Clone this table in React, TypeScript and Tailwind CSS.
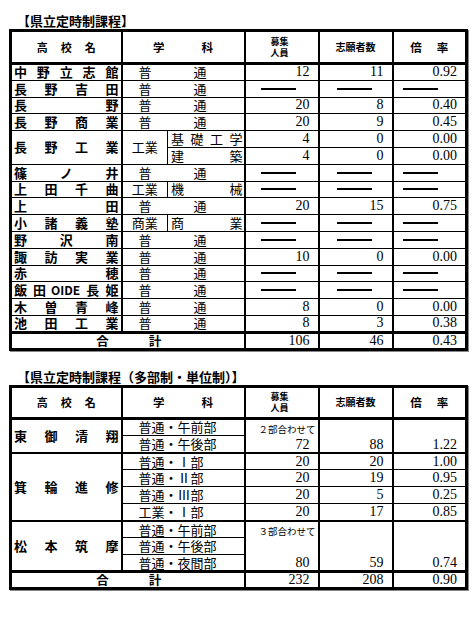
import React from "react";

const G = "font-['Noto_Sans_CJK_JP',sans-serif]";
const S = "font-['Liberation_Serif','Noto_Sans_CJK_JP',serif]";
const base = "border-solid border-black p-0";
const std = `${base} border-y border-x-2`;

function Spread({ items, className = "" }: { items: string[]; className?: string }) {
  return (
    <div className={`flex justify-between ${className}`}>
      {items.map((c, i) => (
        <span key={i}>{c}</span>
      ))}
    </div>
  );
}

function NameTd({ items, rowSpan, extra = "" }: { items: string[]; rowSpan?: number; extra?: string }) {
  return (
    <td rowSpan={rowSpan} className={`${std} ${extra} ${G} font-bold text-[13px] leading-[14px] align-middle`}>
      <Spread items={items} className="px-[2px]" />
    </td>
  );
}

function Futsu({ extra = "" }: { extra?: string }) {
  return (
    <td colSpan={2} className={`${std} ${extra} ${G} text-[13px] leading-[14px]`}>
      <div className="flex pl-[16px]">
        <span>普</span>
        <span className="ml-[42px]">通</span>
      </div>
    </td>
  );
}

function Num({ v, extra = "" }: { v: string; extra?: string }) {
  return (
    <td className={`${std} ${extra} ${S} text-[14px] leading-[14px] text-right pr-[8px]`}>{v}</td>
  );
}

function Dashes() {
  return (
    <>
      <td className={std}>
        <div className="h-[2px] w-[35px] bg-black ml-[15px]" />
      </td>
      <td className={std}>
        <div className="h-[2px] w-[35px] bg-black ml-[17px]" />
      </td>
      <td className={std}>
        <div className="h-[2px] w-[35px] bg-black ml-[9px]" />
      </td>
    </>
  );
}

function Nums({ a, b, c, extra = "" }: { a: string; b: string; c: string; extra?: string }) {
  return (
    <>
      <Num v={a} extra={extra} />
      <Num v={b} extra={extra} />
      <Num v={c} extra={extra} />
    </>
  );
}

function Cols() {
  return (
    <colgroup>
      <col className="w-[111px]" />
      <col className="w-[46px]" />
      <col className="w-[77px]" />
      <col className="w-[74px]" />
      <col className="w-[74px]" />
      <col className="w-[74px]" />
    </colgroup>
  );
}

function Header({ h }: { h: string }) {
  const th = `${std} border-b-[3px] ${G} font-bold align-middle`;
  return (
    <tr className={h}>
      <td className={th}>
        <div className="flex justify-center gap-[13px] text-[11px] leading-[14px]">
          <span>高</span>
          <span>校</span>
          <span>名</span>
        </div>
      </td>
      <td colSpan={2} className={th}>
        <div className="flex justify-center gap-[37px] text-[11.5px] leading-[14px]">
          <span>学</span>
          <span>科</span>
        </div>
      </td>
      <td className={th}>
        <div className="flex flex-col items-center text-[9px] leading-[11px] pr-[4px]">
          <span>募集</span>
          <span>人員</span>
        </div>
      </td>
      <td className={th}>
        <div className="text-center text-[10px] leading-[12px]">志願者数</div>
      </td>
      <td className={th}>
        <div className="flex justify-center gap-[15px] text-[11.5px] leading-[14px]">
          <span>倍</span>
          <span>率</span>
        </div>
      </td>
    </tr>
  );
}

function TotalRow({ a, b, c, h }: { a: string; b: string; c: string; h: string }) {
  const t = `${std} border-t-[3px]`;
  return (
    <tr className={h}>
      <td colSpan={3} className={`${t} ${G} font-bold text-[12.5px] leading-[14px]`}>
        <div className="flex justify-center gap-[40px] pl-[2px]">
          <span>合</span>
          <span>計</span>
        </div>
      </td>
      <Nums a={a} b={b} c={c} extra="border-t-[3px]" />
    </tr>
  );
}

function SubDept({ left, right, rowSpan, extra = "" }: { left?: string; right: string[]; rowSpan?: number; extra?: string }) {
  return (
    <>
      {left !== undefined && (
        <td rowSpan={rowSpan} className={`${base} border-y border-l-2 border-r ${extra} ${G} text-[13px] leading-[14px] text-center align-middle`}>
          {left}
        </td>
      )}
      <td className={`${base} border-y border-r-2 border-l ${extra} ${G} text-[13px] leading-[14px]`}>
        <Spread items={right} className="pl-[3px] pr-[1px]" />
      </td>
    </>
  );
}

function Table1() {
  const R = "h-[16.8px]";
  return (
    <table className="table-fixed border-collapse border-[3px] border-solid border-black w-[456px] shadow-[1px_1px_0_#888]">
      <Cols />
      <tbody>
        <Header h="h-[33px]" />
        <tr className={R}>
          <NameTd items={["中", "野", "立", "志", "館"]} />
          <Futsu />
          <Nums a="12" b="11" c="0.92" />
        </tr>
        <tr className={R}>
          <NameTd items={["長", "野", "吉", "田"]} />
          <Futsu />
          <Dashes />
        </tr>
        <tr className={R}>
          <NameTd items={["長", "野"]} />
          <Futsu />
          <Nums a="20" b="8" c="0.40" />
        </tr>
        <tr className={R}>
          <NameTd items={["長", "野", "商", "業"]} />
          <Futsu />
          <Nums a="20" b="9" c="0.45" />
        </tr>
        <tr className={R}>
          <NameTd items={["長", "野", "工", "業"]} rowSpan={2} />
          <SubDept left="工業" rowSpan={2} right={["基", "礎", "工", "学"]} />
          <Nums a="4" b="0" c="0.00" />
        </tr>
        <tr className={R}>
          <SubDept right={["建", "築"]} />
          <Nums a="4" b="0" c="0.00" />
        </tr>
        <tr className={R}>
          <NameTd items={["篠", "ノ", "井"]} />
          <Futsu />
          <Dashes />
        </tr>
        <tr className={R}>
          <NameTd items={["上", "田", "千", "曲"]} />
          <SubDept left="工業" right={["機", "械"]} />
          <Dashes />
        </tr>
        <tr className={R}>
          <NameTd items={["上", "田"]} />
          <Futsu />
          <Nums a="20" b="15" c="0.75" />
        </tr>
        <tr className={R}>
          <NameTd items={["小", "諸", "義", "塾"]} />
          <SubDept left="商業" right={["商", "業"]} />
          <Dashes />
        </tr>
        <tr className={R}>
          <NameTd items={["野", "沢", "南"]} />
          <Futsu />
          <Dashes />
        </tr>
        <tr className={R}>
          <NameTd items={["諏", "訪", "実", "業"]} />
          <Futsu />
          <Nums a="10" b="0" c="0.00" />
        </tr>
        <tr className={R}>
          <NameTd items={["赤", "穂"]} />
          <Futsu />
          <Dashes />
        </tr>
        <tr className={R}>
          <td className={`${std} ${G} font-bold text-[13px] leading-[14px]`}>
            <div className="flex px-[2px]">
              <span>飯</span>
              <span className="ml-[6px]">田</span>
              <span className="ml-[5px] text-[12px]">OIDE</span>
              <span className="ml-[6px]">長</span>
              <span className="ml-auto">姫</span>
            </div>
          </td>
          <Futsu />
          <Dashes />
        </tr>
        <tr className={R}>
          <NameTd items={["木", "曽", "青", "峰"]} />
          <Futsu />
          <Nums a="8" b="0" c="0.00" />
        </tr>
        <tr className={R}>
          <NameTd items={["池", "田", "工", "業"]} />
          <Futsu />
          <Nums a="8" b="3" c="0.38" />
        </tr>
        <TotalRow a="106" b="46" c="0.43" h="h-[16px]" />
      </tbody>
    </table>
  );
}

function Dept2({ text, extra = "" }: { text: string; extra?: string }) {
  return (
    <td colSpan={2} className={`${std} ${extra} ${G} text-[13px] leading-[14px] pl-[16px]`}>
      {text}
    </td>
  );
}

function Merged({ rowSpan, h, label, v, extra = "" }: { rowSpan: number; h: string; label?: string; v: string; extra?: string }) {
  return (
    <td rowSpan={rowSpan} className={`${std} ${extra} align-top`}>
      <div className={`flex flex-col justify-between ${h}`}>
        <div className={`${G} text-[9.5px] leading-[12px] pl-[13px] pt-[3px]`}>{label ?? ""}</div>
        <div className={`${S} text-[14px] leading-[15px] text-right pr-[8px]`}>{v}</div>
      </div>
    </td>
  );
}

function Table2() {
  const R = "h-[17px]";
  const T = "border-t-2";
  return (
    <table className="table-fixed border-collapse border-[3px] border-solid border-black w-[456px] shadow-[1px_1px_0_#888]">
      <Cols />
      <tbody>
        <Header h="h-[32px]" />
        <tr className={R}>
          <NameTd items={["東", "御", "清", "翔"]} rowSpan={2} />
          <Dept2 text="普通・午前部" />
          <Merged rowSpan={2} h="h-[32px]" label="２部合わせて" v="72" />
          <Merged rowSpan={2} h="h-[32px]" v="88" />
          <Merged rowSpan={2} h="h-[32px]" v="1.22" />
        </tr>
        <tr className={R}>
          <Dept2 text="普通・午後部" />
        </tr>
        <tr className={R}>
          <NameTd items={["箕", "輪", "進", "修"]} rowSpan={4} extra={T} />
          <Dept2 text="普通・Ⅰ部" extra={T} />
          <Nums a="20" b="20" c="1.00" extra={T} />
        </tr>
        <tr className={R}>
          <Dept2 text="普通・Ⅱ部" />
          <Nums a="20" b="19" c="0.95" />
        </tr>
        <tr className={R}>
          <Dept2 text="普通・Ⅲ部" />
          <Nums a="20" b="5" c="0.25" />
        </tr>
        <tr className={R}>
          <Dept2 text="工業・Ⅰ部" />
          <Nums a="20" b="17" c="0.85" />
        </tr>
        <tr className={R}>
          <NameTd items={["松", "本", "筑", "摩"]} rowSpan={3} extra={T} />
          <Dept2 text="普通・午前部" extra={T} />
          <Merged rowSpan={3} h="h-[48px]" label="３部合わせて" v="80" extra={T} />
          <Merged rowSpan={3} h="h-[48px]" v="59" extra={T} />
          <Merged rowSpan={3} h="h-[48px]" v="0.74" extra={T} />
        </tr>
        <tr className={R}>
          <Dept2 text="普通・午後部" />
        </tr>
        <tr className={R}>
          <Dept2 text="普通・夜間部" />
        </tr>
        <TotalRow a="232" b="208" c="0.90" h="h-[17px]" />
      </tbody>
    </table>
  );
}

export default function App() {
  return (
    <div className="w-[473px] h-[633px] bg-white text-black pl-[9px] pt-[13px]">
      <div className={`${G} font-bold text-[13px] leading-[16px] pl-[8px]`}>【県立定時制課程】</div>
      <Table1 />
      <div className={`${G} font-bold text-[13px] leading-[16px] pl-[8px] mt-[18px]`}>
        【県立定時制課程（多部制・単位制）】
      </div>
      <Table2 />
    </div>
  );
}
